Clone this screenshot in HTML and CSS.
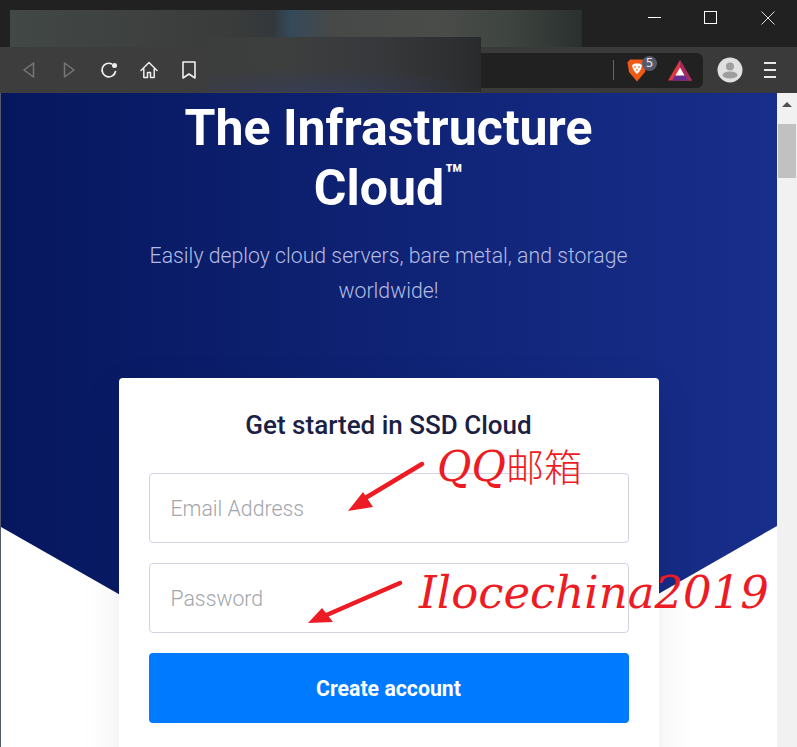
FILE: index.html
```html
<!DOCTYPE html>
<html lang="en">
<head>
<meta charset="utf-8">
<title>The Infrastructure Cloud</title>
<link rel="stylesheet" href="styles.css">
</head>
<body>
<div class="browser">
  <header class="titlebar">
    <div class="blur-tab"></div>
    <div class="win-controls">
      <svg class="win-icon" viewBox="0 0 14 14" width="14" height="14"><path d="M0 6.500H13" stroke="#fff" fill="none"/></svg>
      <svg class="win-icon" viewBox="0 0 14 14" width="14" height="14"><rect x="0.500" y="0.500" width="12" height="12" stroke="#fff" fill="none"/></svg>
      <svg class="win-icon win-close" viewBox="0 0 14 14" width="14" height="14"><path d="M.5.5L13.500 13.500M13.500.5L.5 13.500" stroke="#ddd" fill="none"/></svg>
    </div>
  </header>
  <nav class="toolbar">
    <div class="nav-buttons">
      <svg viewBox="0 0 18 18" width="18" height="18"><path d="M13.500 2V16L4 9Z" fill="none" stroke="#777" stroke-width="1.500" stroke-linejoin="round"/></svg>
      <svg viewBox="0 0 18 18" width="18" height="18"><path d="M4.500 2V16L14 9Z" fill="none" stroke="#777" stroke-width="1.500" stroke-linejoin="round"/></svg>
      <svg viewBox="0 0 18 18" width="18" height="18"><path d="M15.500 10.500A6.800 6.800 0 1 1 11.500 2.800" fill="none" stroke="#eee" stroke-width="1.700" stroke-linecap="round"/><circle cx="14.500" cy="4.500" r="2.500" fill="#eee"/></svg>
      <svg viewBox="0 0 18 18" width="18" height="18"><path d="M1 9.500L9 1.500L17 9.500M3.800 8V16.500H7.500V11.500H10.500V16.500H14.200V8" fill="none" stroke="#eee" stroke-width="1.500" stroke-linejoin="round" stroke-linecap="round"/></svg>
      <svg viewBox="0 0 18 18" width="18" height="18"><path d="M3 1H15V17L9 13L3 17Z" fill="none" stroke="#eee" stroke-width="1.600" stroke-linejoin="round"/></svg>
    </div>
    <div class="addressbar">
      <div class="address-divider"></div>
      <div class="brave">
        <svg class="brave-lion" viewBox="0 0 20 23" width="20" height="23"><path d="M3 0.500H17L19.500 3.500L18 13L10 22.500L2 13L0.500 3.500Z" fill="#f15a15"/><path d="M5 6L8 4.500H12L15 6L14 10L12 13L10 15L8 13L6 10Z" fill="#fff"/><path d="M7 8H9M11 8H13M9 11H11" stroke="#f15a15" stroke-width="1.200"/></svg>
        <span class="brave-badge">5</span>
      </div>
      <svg class="bat" viewBox="0 0 24 21" width="24" height="21"><path d="M12 0L24 20.500H0Z" fill="#e0383f"/><path d="M12 0L24 20.500H12Z" fill="#a52a5f"/><path d="M4 20.500H20L17 15.500H7Z" fill="#662d91"/><path d="M12 7.500L16.500 15.500H7.500Z" fill="#fff"/></svg>
    </div>
    <div class="avatar">
      <svg viewBox="0 0 26 26" width="26" height="26"><circle cx="13" cy="13" r="12.500" fill="#e0e0e0"/><circle cx="13" cy="9.500" r="4" fill="#9e9e9e"/><ellipse cx="13" cy="18" rx="7.500" ry="3.600" fill="#9e9e9e"/></svg>
    </div>
    <div class="menu-lines"><span></span><span></span><span></span></div>
  </nav>
  <div class="blur-url"></div>
  <div class="viewport">
    <main class="page">
      <div class="hero-bg"></div>
      <section class="hero">
        <h1 class="hero-title">The Infrastructure<br>Cloud<sup class="tm">™</sup></h1>
        <p class="hero-sub">Easily deploy cloud servers, bare metal, and storage worldwide!</p>
      </section>
      <form class="card">
        <h2 class="card-title">Get started in SSD Cloud</h2>
        <div class="field">Email Address</div>
        <div class="field">Password</div>
        <div class="submit">Create account</div>
      </form>
      <svg class="arrows" viewBox="0 0 777 654" width="777" height="654">
        <path d="M422 371L362 407" stroke="#ed1c24" stroke-width="4.500" stroke-linecap="round" fill="none"/>
        <path d="M348 418L363 399L373 414Z" fill="#ed1c24"/>
        <path d="M400 490L322 524" stroke="#ed1c24" stroke-width="4.500" stroke-linecap="round" fill="none"/>
        <path d="M308 530L322 515L333 529Z" fill="#ed1c24"/>
      </svg>
      <span class="note note-qq">QQ<span class="note-cjk">邮箱</span></span>
      <span class="note note-pass">Ilocechina2019</span>
    </main>
    <aside class="scrollbar">
      <div class="scroll-arrow"></div>
      <div class="scroll-thumb"></div>
    </aside>
  </div>
</div>
</body>
</html>
```
FILE: styles.css
```css
* { box-sizing: border-box; }
html, body { margin: 0; padding: 0; height: 100%; overflow: hidden; }
body { font-family: Roboto, "Liberation Sans", sans-serif; background: #fff; }
.browser { position: relative; width: 797px; height: 747px; display: flex; flex-direction: column; overflow: hidden; }

.titlebar { position: relative; height: 47px; flex: none; background: #212121; display: flex; justify-content: flex-end; }
.blur-tab { position: absolute; left: 10px; top: 10px; width: 572px; height: 37px;
  background: linear-gradient(90deg, #414845 0%, #3f4341 15%, #393b3a 40%, #33383c 46%, #34495a 49%, #474948 56%, #4a4c4a 75%, #3d4440 88%, #2a302d 100%); }
.win-controls { position: relative; display: flex; align-items: flex-start; height: 36px; width: 149px; padding-top: 11px; gap: 42px; }
.win-icon { display: block; flex: none; }
.win-close { margin-left: 1px; }

.toolbar { position: relative; height: 46px; flex: none; background: #3a3a3a; display: flex; align-items: center; }
.nav-buttons { position: relative; z-index: 2; display: flex; align-items: center; gap: 22px; width: 207px; height: 46px; padding-left: 20px; background: #3d3d3d; flex: none; }
.nav-buttons svg { flex: none; }
.addressbar { width: 496px; height: 35px; background: #212121; border-radius: 0 6px 6px 0; display: flex; align-items: center; justify-content: flex-end; padding-right: 11px; flex: none; }
.address-divider { width: 1px; height: 20px; background: #666; margin-right: 12px; }
.brave { position: relative; width: 31px; height: 23px; margin-right: 11px; }
.brave-lion { display: block; margin-left: 1px; }
.brave-badge { position: absolute; left: 16px; top: -3px; width: 15px; height: 15px; border-radius: 50%; background: #565a6b; color: #e6e6ea; font: 12px/15px "DejaVu Sans", sans-serif; text-align: center; }
.bat { flex: none; }
.avatar { margin-left: 14px; width: 26px; height: 26px; flex: none; }
.menu-lines { margin-left: 21px; width: 12px; display: flex; flex-direction: column; gap: 5px; flex: none; }
.menu-lines span { display: block; height: 2px; background: #e8e8e8; }
.blur-url { position: absolute; left: 207px; top: 37px; width: 274px; height: 56px;
  background: radial-gradient(ellipse 180px 24px at 40% 100%, rgba(50, 60, 100, .55), transparent), linear-gradient(90deg, #3c3d3d, #3d3e3e 30%, #37393c 60%, #2e2f30 90%, #292a2b);
  border-bottom: 1px solid #45423a; }

.viewport { flex: 1; display: flex; min-height: 0; }
.page { position: relative; flex: 1; overflow: hidden; border-left: 1px solid #555a6b; background: #fff; display: flex; flex-direction: column; align-items: center; padding-right: 1px; }
.hero-bg { position: absolute; left: 0; top: 0; width: 100%; height: 655px;
  background: linear-gradient(90deg, #06175e 0%, #182e8b 100%);
  clip-path: polygon(0 0, 100% 0, 100% 433px, 50% 655px, 0 434px); }
.hero { position: relative; width: 540px; text-align: center; flex: none; }
.hero-title { margin: 5px 0 0; font-size: 50px; line-height: 60px; font-weight: 700; color: #fff; }
.tm { font-size: 30px; line-height: 0; vertical-align: 20px; font-weight: 700; }
.hero-sub { margin: 20px 0 0; padding: 0 30px; font-size: 21.250px; line-height: 35px; font-weight: 300; color: #b3bce2; }

.card { position: relative; margin-top: 70px; width: 540px; padding: 30px 30px 60px; background: #fff; border-radius: 4px; box-shadow: 0 10px 40px rgba(0, 0, 0, .08); display: flex; flex-direction: column; gap: 20px; flex: none; }
.card-title { margin: 0 0 11px; height: 34px; font-size: 26px; line-height: 34px; font-weight: 500; color: #1a2144; text-align: center; }
.field { height: 70px; border: 1px solid #d2d3e3; border-radius: 4px; padding-left: 21px; font-size: 21.250px; font-weight: 300; line-height: 70px; color: #a2a6ab; }
.submit { height: 70px; border-radius: 4px; background: #007bff; color: #fff; font-size: 21.250px; font-weight: 700; line-height: 72px; text-align: center; }

.arrows { position: absolute; left: -1px; top: 0; }
.note { position: absolute; color: #ed1c24; font-family: "DejaVu Serif", serif; font-style: italic; white-space: nowrap; }
.note-qq { left: 436px; top: 342px; font-size: 42px; line-height: 60px; }
.note-cjk { font-family: "Noto Sans CJK SC", serif; font-style: normal; font-size: 38px; font-weight: 300; }
.note-pass { left: 418px; top: 470px; font-size: 45px; line-height: 60px; }

.scrollbar { position: relative; width: 20px; flex: none; background: #f1f1f1; }
.scroll-arrow { margin: 9px auto 0; width: 0; height: 0; border-left: 5px solid transparent; border-right: 5px solid transparent; border-bottom: 5px solid #505050; }
.scroll-thumb { margin: 17px auto 0 1px; width: 18px; height: 54px; background: #c1c1c1; }
```
